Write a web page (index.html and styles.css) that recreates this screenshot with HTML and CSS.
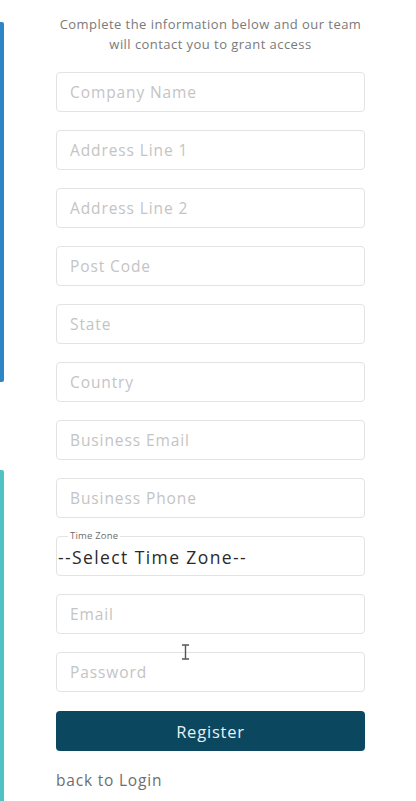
FILE: index.html
```html
<!DOCTYPE html>
<html lang="en">
<head>
<meta charset="utf-8">
<title>Register</title>
<link rel="stylesheet" href="styles.css">
</head>
<body>
<div class="page">
  <div class="rail">
    <div class="rail-blue"></div>
    <div class="rail-teal"></div>
  </div>
  <main class="form-wrap">
    <p class="intro">Complete the information below and our team will contact you to grant access</p>
    <form class="form">
      <input class="field" type="text" placeholder="Company Name">
      <input class="field" type="text" placeholder="Address Line 1">
      <input class="field" type="text" placeholder="Address Line 2">
      <input class="field" type="text" placeholder="Post Code">
      <input class="field" type="text" placeholder="State">
      <input class="field" type="text" placeholder="Country">
      <input class="field" type="text" placeholder="Business Email">
      <input class="field" type="text" placeholder="Business Phone">
      <fieldset class="tz">
        <legend class="tz-legend">Time Zone</legend>
        <div class="tz-value">--Select Time Zone--</div>
      </fieldset>
      <input class="field" type="text" placeholder="Email">
      <div class="pw-wrap">
        <input class="field" type="password" placeholder="Password">
        <svg class="cursor" width="9" height="16" viewBox="0 0 9 16"><path d="M1 1h7M4.5 1v14M1 15h7" stroke="#555" stroke-width="1.4" fill="none"/></svg>
      </div>
      <button class="btn" type="button">Register</button>
    </form>
    <a class="back" href="#">back to Login</a>
  </main>
</div>
</body>
</html>
```
FILE: styles.css
```css
* { box-sizing: border-box; }
html, body { margin: 0; padding: 0; background: #fff; }
body { font-family: "Open Sans", "Liberation Sans", sans-serif; width: 416px; height: 801px; overflow: hidden; }

.page { display: flex; height: 801px; }

.rail { width: 4px; display: flex; flex-direction: column; }
.rail-blue { margin-top: 22px; height: 360px; background: #2f86c6; border-radius: 0 2px 2px 0; }
.rail-teal { margin-top: 88px; flex: 1; background: #4fc3c4; border-radius: 0 2px 0 0; }

.form-wrap { margin-left: 52px; width: 309px; display: flex; flex-direction: column; }

.intro {
  margin: 15px 0 0;
  text-align: center;
  font-size: 13px;
  line-height: 19.5px;
  color: #7a7a7a;
  letter-spacing: 0.45px;
}

.form { display: flex; flex-direction: column; gap: 18px; margin-top: 18px; }

.field {
  display: block;
  width: 100%;
  height: 40px;
  border: 1px solid #e3e3e3;
  border-radius: 4px;
  padding: 0 13px;
  font-family: inherit;
  font-size: 15.5px;
  letter-spacing: 0.9px;
  color: #333;
  background: #fff;
  outline: none;
}
.field::placeholder { color: #c4c4c4; }

.tz {
  margin: -5px 0 0;
  height: 45px;
  border: 1px solid #e3e3e3;
  border-radius: 4px;
  padding: 0 0 0 1px;
}
.tz-legend {
  font-size: 9.5px;
  color: #6d6d6d;
  padding: 0 2px;
  margin-left: 10px;
  line-height: 10px;
  letter-spacing: 0.2px;
}
.tz-value {
  font-size: 17.5px;
  color: #2a2a2a;
  line-height: 22px;
  margin-top: 5px;
  letter-spacing: 1.4px;
}

.pw-wrap { position: relative; }
.cursor { position: absolute; left: 125px; top: -8px; }

.btn {
  height: 40px;
  margin-top: 1px;
  border: none;
  border-radius: 4px;
  background: #0c4760;
  color: #e8f1f4;
  font-family: inherit;
  font-size: 16.5px;
  font-weight: 500;
  letter-spacing: 0.8px;
}

.back {
  margin-top: 18px;
  font-size: 15.5px;
  color: #6e6e6e;
  text-decoration: none;
  letter-spacing: 0.8px;
}
```
